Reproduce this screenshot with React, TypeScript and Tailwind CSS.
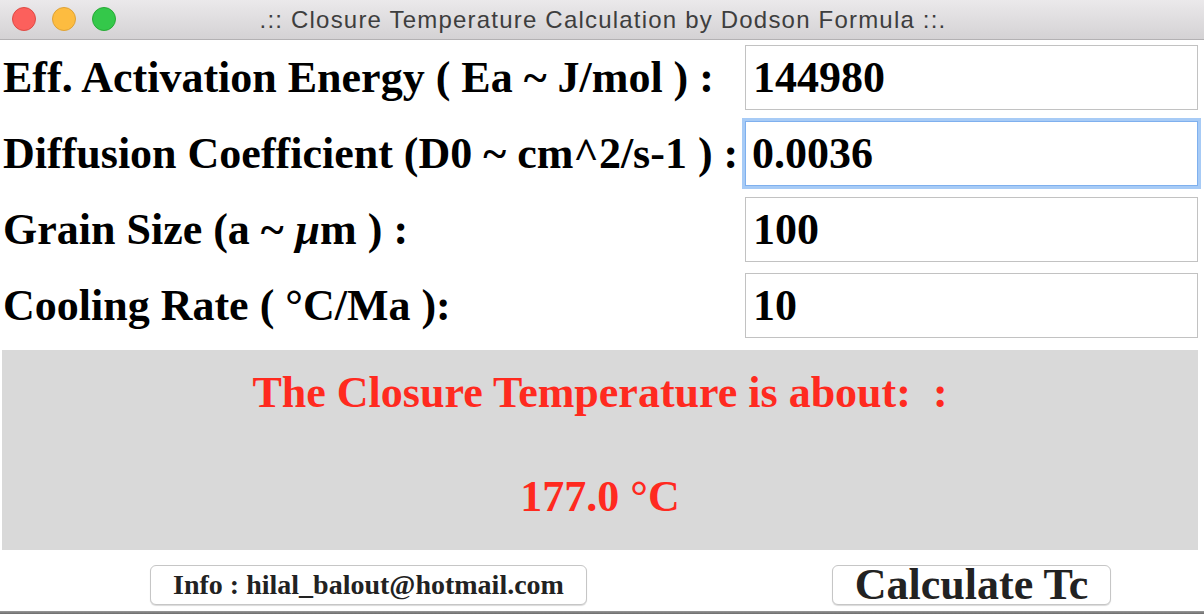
import React from 'react';

const serif = { fontFamily: '"Liberation Serif", "Times New Roman", serif' };

interface FieldRowProps {
  label: React.ReactNode;
  value: string;
  focused?: boolean;
}

const FieldRow: React.FC<FieldRowProps> = ({ label, value, focused }) => {
  return (
    <div className="flex items-center h-[65px]">
      <div className="w-[745px] pl-[3px] text-[44px] font-bold text-black leading-none whitespace-nowrap">
        {label}
      </div>
      <div
        className={
          focused
            ? 'flex-1 h-[65px] mr-[6px] bg-white border border-[#7fb0ee] outline-[3px] outline-solid outline-[#a7cbf6] flex items-center pl-[6px]'
            : 'flex-1 h-[65px] mr-[6px] bg-white border border-[#c2c2c2] flex items-center pl-[7px]'
        }
      >
        <span className="text-[44px] font-bold text-black leading-none">{value}</span>
      </div>
    </div>
  );
};

export default function App() {
  return (
    <div className="w-[1204px] h-[614px] bg-white flex flex-col overflow-hidden" style={serif}>
      {/* title bar */}
      <div className="relative h-[40px] shrink-0 bg-gradient-to-b from-[#ebe9eb] to-[#d4d2d4] border-b border-[#b3b1b3] flex items-center justify-center">
        <div className="absolute left-[12px] top-[7px] flex gap-[16px]">
          <span className="w-[24px] h-[24px] rounded-full bg-[#fc605c] border border-[#de4a44]" />
          <span className="w-[24px] h-[24px] rounded-full bg-[#fdbc40] border border-[#dea236]" />
          <span className="w-[24px] h-[24px] rounded-full bg-[#34c84a] border border-[#27aa35]" />
        </div>
        <span
          className="text-[24px] tracking-[1.2px] text-[#3e3e3e] ml-[2px] leading-none"
          style={{ fontFamily: '"Liberation Sans", Arial, sans-serif' }}
        >
          .:: Closure Temperature Calculation by Dodson Formula ::.
        </span>
      </div>

      {/* fields */}
      <div className="flex flex-col gap-[11px] pt-[5px]">
        <FieldRow label="Eff. Activation Energy ( Ea ~ J/mol ) :" value="144980" />
        <FieldRow label="Diffusion Coefficient (D0 ~ cm^2/s-1 ) :" value="0.0036" focused />
        <FieldRow
          label={
            <>
              Grain Size (a ~ <i>µ</i>m ) :
            </>
          }
          value="100"
        />
        <FieldRow label="Cooling Rate ( °C/Ma ):" value="10" />
      </div>

      {/* result */}
      <div className="mt-[12px] ml-[2px] mr-[6px] h-[200px] bg-[#d9d9d9] flex flex-col items-center text-[#ff2a1f] font-bold text-[44px] leading-none">
        <div className="pt-[21px]">The Closure Temperature is about:&nbsp; :</div>
        <div className="pt-[60px]">177.0 °C</div>
      </div>

      {/* buttons */}
      <div className="flex-1 flex items-start pt-[15px]">
        <div className="w-[150px]" />
        <button className="w-[437px] h-[40px] bg-white border border-[#c6c6c6] rounded-[6px] shadow-[0_1px_1px_rgba(0,0,0,0.15)] text-[28px] font-bold text-[#222] leading-none flex items-center justify-center">
          Info : hilal_balout@hotmail.com
        </button>
        <div className="w-[245px]" />
        <button className="w-[279px] h-[40px] bg-white border border-[#c6c6c6] rounded-[6px] shadow-[0_1px_1px_rgba(0,0,0,0.15)] text-[44px] font-bold text-[#222] leading-none flex items-center justify-center">
          Calculate Tc
        </button>
      </div>
      <div className="h-[3px] bg-gradient-to-b from-[#9a9a9a] to-[#6b6b6b]" />
    </div>
  );
}
